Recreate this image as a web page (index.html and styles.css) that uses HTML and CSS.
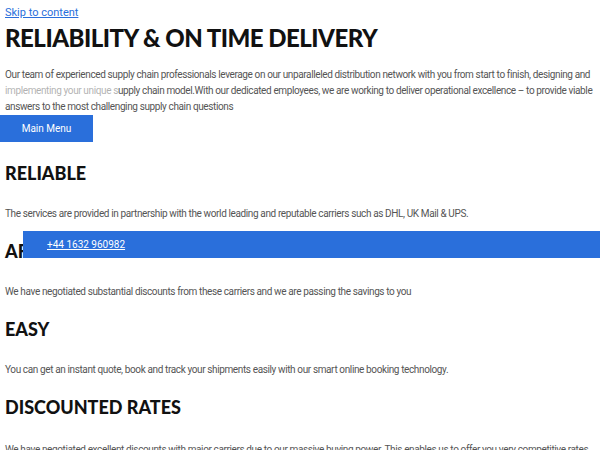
FILE: index.html
```html
<!DOCTYPE html>
<html lang="en">
<head>
  <meta charset="UTF-8">
  <meta name="viewport" content="width=device-width, initial-scale=1.0">
  <link rel="stylesheet" href="styles.css">
  <title>Reliability &amp; On Time Delivery</title>
</head>
<body>

  <a class="skip-link" href="#content">Skip to content</a>

  <!-- header bits that ended up in the flow -->
  <div class="logo-ghost"></div>
  <div class="call-bar">
    <a href="tel:+441632960982">+44 1632 960982</a>
  </div>

  <main id="content" class="content">
    <h1>RELIABILITY &amp; ON TIME DELIVERY</h1>
    <p>Our team of experienced supply chain professionals leverage on our unparalleled distribution network with you from start to finish, designing and implementing your unique supply chain model.With our dedicated employees, we are working to deliver operational excellence – to provide viable answers to the most challenging supply chain questions</p>

    <button class="menu-toggle">Main Menu</button>

    <h2>RELIABLE</h2>
    <p>The services are provided in partnership with the world leading and reputable carriers such as DHL, UK Mail &amp; UPS.</p>

    <h2>AFFORDABLE</h2>
    <p>We have negotiated substantial discounts from these carriers and we are passing the savings to you</p>

    <h2>EASY</h2>
    <p>You can get an instant quote, book and track your shipments easily with our smart online booking technology.</p>

    <h2>DISCOUNTED RATES</h2>
    <p>We have negotiated excellent discounts with major carriers due to our massive buying power. This enables us to offer you very competitive rates.</p>
  </main>

</body>
</html>
```

FILE: styles.css
```css
body {
  margin: 0;
  background-color: #fff;
  font-family: 'Roboto', 'Liberation Sans', sans-serif;
  color: #555;
  position: relative;
}

.skip-link {
  display: block;
  padding: 5px 5px 0;
  font-size: 11px;
  line-height: 15px;
  color: #2a6fdb;
}

.content {
  padding: 0 5px;
}

h1 {
  font-family: 'Lato', sans-serif;
  font-size: 24px;
  font-weight: 900;
  color: #111;
  letter-spacing: -0.5px;
  margin: 4px 0 15px;
  line-height: 28px;
}

h2 {
  font-family: 'Lato', sans-serif;
  font-size: 18px;
  font-weight: 900;
  color: #111;
  margin: -2px 0 21px;
  line-height: 24px;
}

p {
  font-size: 10px;
  line-height: 16px;
  margin: 0 0 19px;
  letter-spacing: -0.38px;
}

.content > p:first-of-type {
  margin-bottom: 0;
}

.content > p:last-of-type {
  padding-top: 2px;
}

.menu-toggle {
  display: block;
  margin: 0 0 21px -5px;
  width: 93px;
  height: 27px;
  border: none;
  background-color: #2a6fdb;
  color: #fff;
  font-family: 'Roboto', sans-serif;
  font-size: 10px;
}

.call-bar {
  position: absolute;
  top: 231px;
  left: 23px;
  right: 0;
  height: 27px;
  background-color: #2a6fdb;
  display: flex;
  align-items: center;
  padding-left: 24px;
  z-index: 2;
}

.call-bar a {
  color: #fff;
  font-size: 10px;
}

.logo-ghost {
  position: absolute;
  top: 84px;
  left: 0;
  width: 118px;
  height: 13px;
  background: rgba(255, 255, 255, 0.55);
  z-index: 2;
}
```
